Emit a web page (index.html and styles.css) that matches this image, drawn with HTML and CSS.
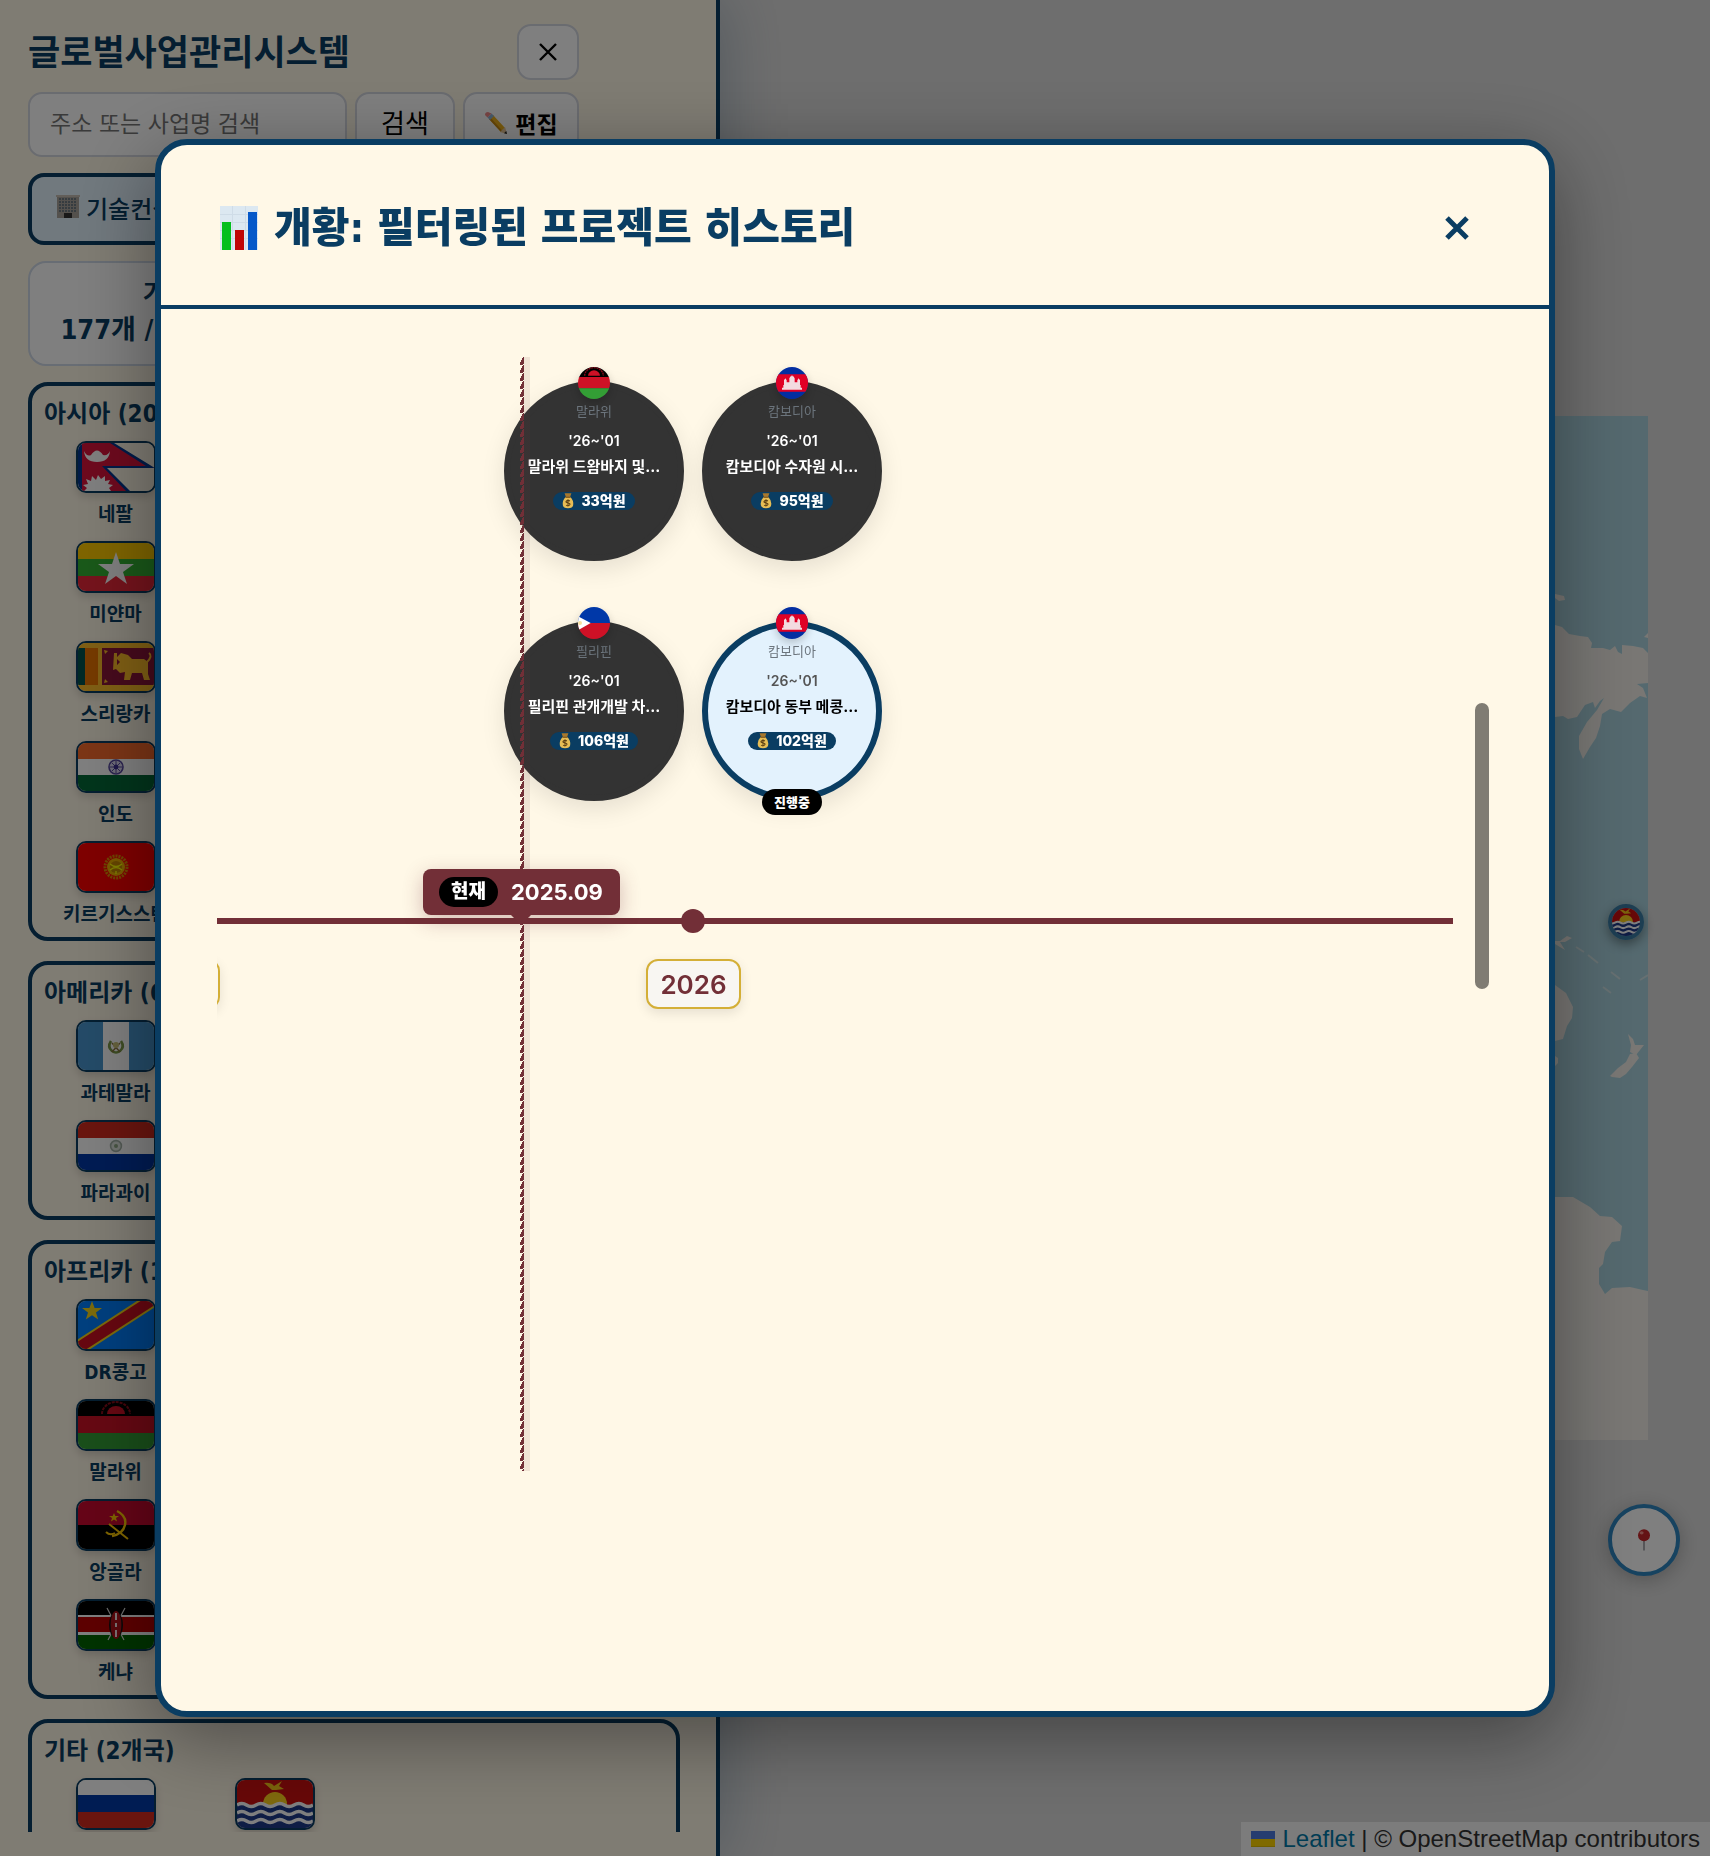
FILE: index.html
```html
<!DOCTYPE html>
<html lang="ko">
<head>
<meta charset="utf-8">
<title>글로벌사업관리시스템</title>
<link rel="stylesheet" href="styles.css">
</head>
<body>
<svg class="defs" aria-hidden="true">
  <symbol id="f-np" viewBox="0 0 76 48" preserveAspectRatio="xMidYMid slice">
    <path fill="#fff8e7" d="M0 0h76v48H0z"/><path fill="#003893" d="M0 0h36l41 25H29l23 23H0z"/><path fill="#dc143c" d="M4 0h28l36 23H24l24 25H4z"/>
    <path fill="#fff" d="M6 8q3 6 7 4q6-9 12 0q5 1 7-4q-1 11-13 11T6 8zM6 48l3-3-4-3 5-1-2-5 5 2 1-5 4 4 2-5 3 4 4-3 0 5 5-1-2 4 5 1-4 3 2 3z"/>
  </symbol>
  <symbol id="f-mm" viewBox="0 0 76 48" preserveAspectRatio="xMidYMid slice">
    <path fill="#fecb00" d="M0 0h76v16H0z"/><path fill="#34b233" d="M0 16h76v17H0z"/><path fill="#ea2839" d="M0 33h76v15H0z"/>
    <path fill="#fff" d="M38 9l4 12h14L45 29l4 12-11-8-11 8 4-12-11-8h14z"/>
  </symbol>
  <symbol id="f-lk" viewBox="0 0 76 48" preserveAspectRatio="xMidYMid slice">
    <path fill="#ffbe29" d="M0 0h76v48H0z"/><path fill="#00534e" d="M0 5h7v37H0z"/><path fill="#eb7400" d="M7 5h13v37H7z"/><path fill="#8d153a" d="M24 5h52v37H24z"/>
    <path fill="#ffbe29" d="M36 10h3v12l3-3-4-4 5-5 7 2 4 4h12l4 3v12l2 6h-6l-2-7h-10l-2 7h-6l1-8-5 1-4-4-3 1zM26 7l4 1-3 3zM26 40l1-4 3 3z"/><path stroke="#ffbe29" stroke-width="2" fill="none" d="M69 19q6-6 2-9"/>
  </symbol>
  <symbol id="f-in" viewBox="0 0 76 48" preserveAspectRatio="xMidYMid slice">
    <path fill="#f96b2c" d="M0 0h76v16H0z"/><path fill="#fff" d="M0 16h76v16H0z"/><path fill="#046a38" d="M0 32h76v16H0z"/>
    <circle cx="38" cy="24" r="7" fill="#dcd8f0" stroke="#5748a0" stroke-width="1.6"/><path stroke="#5748a0" d="M38 18v12M32 24h12M34 20l8 8M42 20l-8 8"/><circle cx="38" cy="24" r="2.4" fill="#3f3296"/>
  </symbol>
  <symbol id="f-kg" viewBox="0 0 76 48" preserveAspectRatio="xMidYMid slice">
    <path fill="#f00" d="M0 0h76v48H0z"/><circle cx="38" cy="24" r="11" fill="none" stroke="#e08a00" stroke-width="3" stroke-dasharray="2 1"/><circle cx="38" cy="24" r="9" fill="#f0b400"/><circle cx="38" cy="24" r="6" fill="#c98a00"/><path stroke="#ff0" fill="none" stroke-width="1.4" d="M32 21q6 5 12 0M32 27q6-5 12 0M38 28v3"/>
  </symbol>
  <symbol id="f-gt" viewBox="0 0 76 48" preserveAspectRatio="xMidYMid slice">
    <path fill="#4997d0" d="M0 0h76v48H0z"/><path fill="#fff" d="M25 0h26v48H25z"/><path fill="none" stroke="#7c9a48" stroke-width="2.6" d="M33 19q-4 6 1 10q4 3 8 0q5-4 1-10"/><path stroke="#8a7440" stroke-width="1.4" d="M34 30l8-9M42 30l-8-9"/><circle cx="38" cy="23" r="3" fill="#c9c27a"/>
  </symbol>
  <symbol id="f-py" viewBox="0 0 76 48" preserveAspectRatio="xMidYMid slice">
    <path fill="#d52b1e" d="M0 0h76v16H0z"/><path fill="#fff" d="M0 16h76v16H0z"/><path fill="#0038a8" d="M0 32h76v16H0z"/><circle cx="38" cy="24" r="5.4" fill="#e2e8e2" stroke="#a5b3a8" stroke-width="1.6"/><circle cx="38" cy="24" r="2" fill="#8fa886"/>
  </symbol>
  <symbol id="f-cd" viewBox="0 0 76 48" preserveAspectRatio="xMidYMid slice">
    <path fill="#007fff" d="M0 0h76v48H0z"/><path stroke="#f7d618" stroke-width="15" d="M-6 51L82-6"/><path stroke="#ce1021" stroke-width="11" d="M-6 51L82-6"/><path fill="#f7d618" d="M14 0l2.600 7H24l-6 4.400 2.200 7.200-6.200-4.300L7.800 18.600 10 11.400 4 7h7.400z"/>
  </symbol>
  <symbol id="f-mw" viewBox="0 0 76 48" preserveAspectRatio="xMidYMid slice">
    <path fill="#000" d="M0 0h76v16H0z"/><path fill="#ce1126" d="M0 15h76v17H0z"/><path fill="#339e35" d="M0 32h76v16H0z"/><path fill="#ce1126" d="M29 13a9 8 0 0 1 18 0z"/><path fill="none" stroke="#8a0c1a" stroke-width="2" stroke-dasharray="3 1" d="M24 13a14 12 0 0 1 28 0"/>
  </symbol>
  <symbol id="f-ao" viewBox="0 0 76 48" preserveAspectRatio="xMidYMid slice">
    <path fill="#cc092f" d="M0 0h76v24H0z"/><path fill="#000" d="M0 24h76v24H0z"/><path fill="none" stroke="#ffcb00" stroke-width="2.400" d="M39 10q10 5 8 14t-13 11"/><path stroke="#ffcb00" stroke-width="2" fill="none" d="M31 23l19 15M28 31q4 4 9 1"/><path fill="#ffcb00" d="M36 12l1.300 3H41l-3 2 1 3.500-3-2-3 2 1-3.500-3-2h3.700z"/>
  </symbol>
  <symbol id="f-ke" viewBox="0 0 76 48" preserveAspectRatio="xMidYMid slice">
    <path fill="#000" d="M0 0h76v14H0z"/><path fill="#fff" d="M0 14h76v20H0z"/><path fill="#b00" d="M0 16h76v15H0z"/><path fill="#060" d="M0 34h76v14H0z"/><path stroke="#ddd" stroke-width="1.200" d="M29 7l17 32M47 7L30 39"/><ellipse cx="38" cy="24" rx="7" ry="13" fill="#111"/><ellipse cx="38" cy="24" rx="5.400" ry="14" fill="#b01018"/><path stroke="#fff" stroke-width="1.800" d="M38 12v7M38 22v4M38 29v7"/>
  </symbol>
  <symbol id="f-ru" viewBox="0 0 76 48" preserveAspectRatio="xMidYMid slice">
    <path fill="#fff" d="M0 0h76v16H0z"/><path fill="#0039a6" d="M0 15h76v17H0z"/><path fill="#d52b1e" d="M0 32h76v16H0z"/>
  </symbol>
  <symbol id="f-ki" viewBox="0 0 76 48" preserveAspectRatio="xMidYMid slice">
    <path fill="#ce1010" d="M0 0h76v26H0z"/><circle cx="38" cy="24" r="12" fill="#ffd21c"/><path fill="#f5c518" d="M27 3q7-1 10 3l8-5-3 5 5 3-8 1-4 0z"/><path fill="#1e3a8a" d="M0 25h76v23H0z"/>
    <path fill="none" stroke="#fff" stroke-width="3.400" d="M0 25q5-3 9.500 0t9.500 0 9.500 0 9.500 0 9.500 0 9.500 0 9.500 0 9.500 0M0 33q5-3 9.500 0t9.500 0 9.500 0 9.500 0 9.500 0 9.500 0 9.500 0 9.500 0M0 41q5-3 9.500 0t9.500 0 9.500 0 9.500 0 9.500 0 9.500 0 9.500 0 9.500 0"/>
  </symbol>
  <symbol id="f-kh" viewBox="0 0 48 48">
    <path fill="#032ea1" d="M0 0h48v48H0z"/><path fill="#e00025" d="M0 11h48v26H0z"/><path fill="#f3dbe0" d="M9 34v-3h2v-4h1v-7l2-3 2 3v3h4v-6l2-3 1 0 1-2 1 2 1 0 2 3v6h4v-3l2-3 2 3v7h1v4h2v3z"/>
  </symbol>
  <symbol id="f-ph" viewBox="0 0 48 48">
    <path fill="#0038a8" d="M0 0h48v24H0z"/><path fill="#ce1126" d="M0 24h48v24H0z"/><path fill="#fff" d="M0 14l19 10L0 35z"/><circle cx="3" cy="24" r="3" fill="#f7dfa0"/>
  </symbol>
  <symbol id="i-bag" viewBox="0 0 14 18">
    <path fill="#a9782c" d="M3 0h8L9.500 4h-5z"/><path fill="#e6bd55" d="M4.500 4h5Q14 8.500 13 14q-.5 3.500-6 3.500T1 14Q0 8.500 4.500 4z"/><path fill="#7c5015" d="M4 4h6v1.300H4z"/><path fill="none" stroke="#5d4013" stroke-width="1.200" d="M9.200 9Q7 7.500 5.200 9t1.800 2.300 1.700 2.400-3.900 0M7 7v8.500"/>
  </symbol>
</svg>

<div class="app">
  <main class="map">
    <svg class="world" viewBox="0 0 1024 1024" aria-hidden="true">
      <path fill="#aad3df" d="M0 0h1024v1024H0z"/>
      <g fill="#f2efe9" transform="translate(931 0)">
        <path d="M0 178l9 2 1 4-6 1-4-3z"/>
        <path d="M0 209L7 211 14 218 25 220 33 221 37 227 36 232 48 232 55 234 60 230 63 236 67 238 67 229 78 230 88 232 93 237V267L82 268 88 272 92 282 85 280 75 287 66 296 55 293 47 298 45 310 41 322 35 331 28 343 24 333 24 320 32 306 42 294 49 282 45 285 40 292 38 286 30 289 22 301 13 303 8 300 0 301z"/>
        <path d="M89 221l4-4v5zM0 525l5 0 7-5 5 2-7 4-5 0 5 8-10-6z"/>
        <path d="M0 569l11 8 7 14-1 11-5 8-4 13-8 2zM0 640l3 2v5l-3 3zM55 660l8-8 8-6 4-8 6-1 3 5-7 9-6 7-6 4-8-1zM73 618l5 5 2 6 9 0-8 10-6-3 1-7z"/>
        <path d="M0 781H18L35 791 45 800 57 801 67 810 65 825 57 826 50 836 48 848 44 852V868L50 878 57 872 75 871 88 874 93 875V1024H0z"/>
      </g>
      <path stroke="#f2efe9" stroke-width="2" fill="none" opacity=".5" d="M952 531l8 5M964 539l10 8M987 556l9 7M979 571l8 6M1016 564l8-5"/>
    </svg>
    <svg class="marker" role="img" aria-label="키리바시"><use href="#f-ki"/></svg>
    <button class="locate" aria-label="내 위치">
      <svg width="16" height="24" viewBox="0 0 20 28"><path stroke="#a9a9ae" stroke-width="2.400" d="M10 12v15"/><circle cx="10" cy="8" r="7.500" fill="#c8262a"/><ellipse cx="7" cy="5" rx="2.500" ry="2" fill="#f58a86"/></svg>
    </button>
    <footer class="credit">
      <svg width="24" height="16" viewBox="0 0 24 16"><path fill="#4c7be1" d="M0 0h24v8H0z"/><path fill="#ffd500" d="M0 8h24v8H0z"/><path fill="#e0bc00" d="M0 15h24v1H0z"/></svg>
      <span><a href="#leaflet">Leaflet</a> | © OpenStreetMap contributors</span>
    </footer>
  </main>

  <aside class="sidebar">
    <div class="tools">
      <div class="brand"><h1>글로벌사업관리시스템</h1>
        <button class="box close" aria-label="닫기"><svg width="20" height="20" viewBox="0 0 20 20"><path stroke="#000" stroke-width="2.400" d="M2 2l16 16M18 2L2 18"/></svg></button></div>
      <form class="search">
        <input class="box" type="text" aria-label="검색어" placeholder="주소 또는 사업명 검색">
        <button class="box find" type="button">검색</button>
        <button class="box edit" type="button"><svg width="24" height="24" viewBox="0 0 24 24"><path fill="#f0b31c" d="M5 8l4-4 12 13-4 4z"/><path fill="#c98a10" d="M5 8l1.500-1.500L18.500 20 17 21z"/><path fill="#8fb4d6" d="M3.500 6.500l4-4L10 5 6 9z"/><path fill="#f08a8a" d="M1 4q0-3 3-3l3.500 1.500-4 4z"/><path fill="#e8c898" d="M21 16l2 7-7-2z"/><path fill="#222" d="M22.300 20l.7 3-3-.8z"/></svg>편집</button>
      </form>
    </div>
    <button class="tab" type="button">
      <svg width="24" height="24" viewBox="0 0 24 24"><path fill="#a8a29a" d="M1 1h22v22H1z"/><path stroke="#5a6b78" stroke-width="1.500" stroke-dasharray="2 1" d="M3 4h18M3 7h18M3 10h18M3 13h18M3 16h18"/><path fill="#333" d="M8 18h8v5H8z"/><path fill="#c4bdb2" d="M0 0h24v2H0z"/></svg>기술컨설팅
    </button>
    <section class="stat"><h2>기술컨설</h2><p>177개 / 18,200억 원</p></section>
    <div class="regions">
      <section class="region"><h2>아시아 (20개국)</h2>
        <ul>
          <li class="first"><svg><use href="#f-np"/></svg>네팔</li>
          <li class="first"><svg><use href="#f-mm"/></svg>미얀마</li>
          <li class="first"><svg><use href="#f-lk"/></svg>스리랑카</li>
          <li class="first"><svg><use href="#f-in"/></svg>인도</li>
          <li class="first"><svg><use href="#f-kg"/></svg>키르기스스탄</li>
        </ul>
      </section>
      <section class="region"><h2>아메리카 (6개국)</h2>
        <ul>
          <li class="first"><svg><use href="#f-gt"/></svg>과테말라</li>
          <li class="first"><svg><use href="#f-py"/></svg>파라과이</li>
        </ul>
      </section>
      <section class="region"><h2>아프리카 (16개국)</h2>
        <ul>
          <li class="first"><svg><use href="#f-cd"/></svg>DR콩고</li>
          <li class="first"><svg><use href="#f-mw"/></svg>말라위</li>
          <li class="first"><svg><use href="#f-ao"/></svg>앙골라</li>
          <li class="first"><svg><use href="#f-ke"/></svg>케냐</li>
        </ul>
      </section>
      <section class="region"><h2>기타 (2개국)</h2>
        <ul>
          <li><svg><use href="#f-ru"/></svg></li>
          <li><svg><use href="#f-ki"/></svg></li>
        </ul>
      </section>
    </div>
  </aside>
</div>

<div class="overlay">
  <div class="modal" role="dialog" aria-labelledby="modal-title">
    <header class="modal-head">
      <h2 id="modal-title"><svg width="38" height="44" viewBox="0 0 38 44"><path fill="#dce8f1" d="M0 0h38v44H0z"/><path stroke="#cfdce7" d="M0 8.500h38M0 16.500h38M0 24.500h38M0 32.500h38M12.500 0v44M25.500 0v44"/><path fill="#04bf1e" d="M2 16h9v28H2z"/><path fill="#c00505" d="M15 24h9v20h-9z"/><path fill="#0558c9" d="M28 6h9v38h-9z"/></svg>개황: 필터링된 프로젝트 히스토리</h2>
      <button class="dismiss" aria-label="닫기"><svg width="24" height="24" viewBox="0 0 24 24"><path stroke="#0a3d62" stroke-width="5" d="M2 2l20 20M22 2L2 22"/></svg></button>
    </header>
    <div class="modal-body">
      <div class="timeline">
        <div class="axis"></div>
        <div class="tick"></div>
        <span class="year prev"></span>
        <span class="year">2026</span>
        <div class="projects">
          <article class="card"><svg class="flag"><use href="#f-mw"/></svg><small>말라위</small><time>'26~'01</time><b>말라위 드왐바지 및...</b><span class="cost"><svg width="12" height="16"><use href="#i-bag"/></svg>33억원</span></article>
          <article class="card"><svg class="flag"><use href="#f-kh"/></svg><small>캄보디아</small><time>'26~'01</time><b>캄보디아 수자원 시...</b><span class="cost"><svg width="12" height="16"><use href="#i-bag"/></svg>95억원</span></article>
          <article class="card"><svg class="flag"><use href="#f-ph"/></svg><small>필리핀</small><time>'26~'01</time><b>필리핀 관개개발 차...</b><span class="cost"><svg width="12" height="16"><use href="#i-bag"/></svg>106억원</span></article>
          <article class="card active"><svg class="flag"><use href="#f-kh"/></svg><small>캄보디아</small><time>'26~'01</time><b>캄보디아 동부 메콩...</b><span class="cost"><svg width="12" height="16"><use href="#i-bag"/></svg>102억원</span><span class="status">진행중</span></article>
        </div>
        <div class="now-line"></div>
        <div class="now"><span>현재</span>2025.09</div>
      </div>
      <div class="thumb"></div>
    </div>
  </div>
</div>
</body>
</html>
```
FILE: styles.css
```css
* { box-sizing: border-box; }
body {
  margin: 0;
  height: 100vh;
  overflow: hidden;
  font-family: "DejaVu Sans Condensed", "Noto Sans CJK KR", sans-serif;
  color: #0a3d62;
}
h1, h2, p, ul { margin: 0; padding: 0; }
button, input { font: inherit; }
.defs { position: absolute; width: 0; height: 0; }

/* map */
.app { position: relative; height: 100vh; }
.map { position: absolute; inset: 0; background: #ddd; overflow: hidden; }
.world { position: absolute; top: 416px; right: 62px; width: 1024px; height: 1024px; }
.marker {
  position: absolute;
  top: 904px;
  right: 66px;
  width: 36px;
  height: 36px;
  border: 4px solid #3a7ca5;
  border-radius: 50%;
  box-shadow: 0 4px 12px rgba(0, 0, 0, .4);
}
.locate {
  position: absolute;
  right: 30px;
  bottom: 280px;
  width: 72px;
  height: 72px;
  display: grid;
  place-items: center;
  background: #fff;
  border: 4px solid #2e86c1;
  border-radius: 50%;
  box-shadow: 0 4px 20px rgba(0, 0, 0, .25);
}
.credit {
  position: absolute;
  right: 0;
  bottom: 0;
  display: flex;
  align-items: center;
  gap: 8px;
  padding: 0 10px;
  background: rgba(255, 255, 255, .8);
  color: #333;
  font: 24px/34px "Liberation Sans", sans-serif;
}
.credit a { color: #0078a8; text-decoration: none; }

/* sidebar */
.sidebar {
  position: relative;
  width: 720px;
  height: 100vh;
  display: flex;
  flex-direction: column;
  gap: 16px;
  padding: 24px 36px 24px 28px;
  background: #fff8e7;
  border-right: 4px solid #0a3d62;
  box-shadow: 0 0 60px rgba(10, 61, 98, .3);
}
.tools { display: flex; flex-direction: column; gap: 12px; width: 551px; }
.brand { display: flex; justify-content: space-between; align-items: center; }
.brand h1 { padding-top: 2px; font-size: 35px; line-height: 48px; font-weight: 700; }
.box { background: #fff; border: 2px solid #d5d8e0; border-radius: 14px; color: #000; }
.close { width: 62px; height: 56px; display: grid; place-items: center; padding: 0; }
.search { display: flex; gap: 8px; height: 65px; }
.search input { flex: 1; min-width: 0; padding: 0 20px 2px; font-size: 23px; }
.search input::placeholder { color: #757575; }
.find { width: 100px; padding: 0 0 6px; font-size: 26px; font-weight: 400; }
.edit { width: 116px; padding: 0 0 4px; display: flex; align-items: center; justify-content: center; gap: 7px; font-size: 23px; font-weight: 700; }
.tab {
  display: flex;
  align-items: center;
  gap: 6px;
  width: 318px;
  height: 72px;
  flex: none;
  padding: 0 24px 4px;
  border: 4px solid #0a3d62;
  border-radius: 16px;
  background: #e3f2fd;
  color: #0a3d62;
  font-size: 24px;
  font-weight: 500;
}
.stat {
  width: 318px;
  height: 105px;
  flex: none;
  padding: 12px 0;
  border: 2px solid #d0dae8;
  border-radius: 18px;
  background: #fff;
  text-align: center;
  white-space: nowrap;
}
.stat h2 { font-size: 24px; line-height: 36px; }
.stat p { font-size: 27px; line-height: 38px; font-weight: 700; }
.regions { flex: 1; min-height: 0; overflow: hidden; display: flex; flex-direction: column; gap: 20px; }
.region { flex: none; padding: 12px; border: 4px solid #0a3d62; border-radius: 20px; }
.region h2 { margin-bottom: 10px; font-size: 24px; line-height: 33px; font-weight: 700; }
.region ul { display: grid; grid-template-columns: repeat(4, 1fr); gap: 16px; list-style: none; }
.region li { height: 84px; display: flex; flex-direction: column; align-items: center; gap: 10px; font-size: 19px; line-height: 22px; font-weight: 700; white-space: nowrap; }
.region .first { grid-column: 1; }
.region li svg { width: 80px; height: 52px; flex: none; border: 2px solid #0a3d62; border-radius: 10px; box-shadow: 0 4px 8px rgba(0, 0, 0, .15); }

/* modal */
.overlay { position: fixed; inset: 0; display: grid; place-items: center; background: rgba(0, 0, 0, .5); }
.modal {
  width: 82%;
  max-width: 1400px;
  height: 85vh;
  display: flex;
  flex-direction: column;
  background: #fff8e7;
  border: 6px solid #0a3d62;
  border-radius: 32px;
  box-shadow: 0 20px 80px rgba(0, 0, 0, .4);
  font-family: Inter, "Noto Sans CJK KR", sans-serif;
}
.modal-head { height: 164px; flex: none; display: flex; justify-content: space-between; align-items: center; padding: 6px 76px 0 59px; border-bottom: 4px solid #0a3d62; }
.modal-head h2 { display: flex; align-items: center; gap: 16px; font-family: "DejaVu Sans Condensed", "Noto Sans CJK KR", sans-serif; font-size: 41px; line-height: 56px; font-weight: 900; }
.dismiss { width: 32px; height: 32px; padding: 0; display: grid; place-items: center; background: none; border: 0; }
.modal-body { position: relative; flex: 1; padding: 48px 96px 0 56px; }
.timeline { position: relative; height: 60vh; overflow: hidden; color: #722f37; }
.axis { position: absolute; top: 561px; left: 0; right: 0; height: 6px; background: #722f37; }
.tick { position: absolute; top: 552px; left: 464px; width: 24px; height: 24px; border-radius: 50%; background: #722f37; }
.year {
  position: absolute;
  top: 602px;
  left: 429px;
  width: 95px;
  height: 50px;
  border: 2px solid #d4af37;
  border-radius: 12px;
  background: #f8f6f2;
  box-shadow: 0 4px 12px rgba(0, 0, 0, .1);
  font-size: 26px;
  line-height: 47px;
  font-weight: 600;
  text-align: center;
}
.prev { left: -92px; }
.projects { position: absolute; top: 24px; left: 287px; display: grid; grid-template-columns: 180px 180px; gap: 60px 18px; }
.card {
  position: relative;
  width: 180px;
  height: 180px;
  display: flex;
  flex-direction: column;
  align-items: center;
  padding-top: 14px;
  border: 6px solid #333;
  border-radius: 50%;
  background: #333;
  color: #fff;
  box-shadow: 0 8px 24px rgba(0, 0, 0, .1);
  white-space: nowrap;
}
.active { background: #e3f2fd; border-color: #0a3d62; color: #000; }
.flag { position: absolute; top: -20px; left: 68px; width: 32px; height: 32px; border-radius: 50%; box-shadow: 0 4px 8px rgba(0, 0, 0, .2); }
.card small { font-size: 13px; line-height: 20px; color: #6c757d; }
.card time { margin-top: 10px; font-size: 14px; line-height: 20px; font-weight: 600; }
.active time { color: #555; }
.card b { margin-top: 4px; font-size: 15px; line-height: 24px; font-weight: 700; }
.cost { display: flex; align-items: center; gap: 7px; height: 18px; margin-top: 13px; padding: 0 9px; border-radius: 9px; background: #0a3d62; color: #fff; font-size: 14px; line-height: 18px; font-weight: 800; }
.status { position: absolute; bottom: -20px; padding: 0 12px; border-radius: 13px; background: #000; color: #fff; font-size: 13px; line-height: 26px; font-weight: 900; }
.now-line {
  position: absolute;
  top: 0;
  bottom: 0;
  left: 303px;
  width: 10px;
  background:
    linear-gradient(to bottom right, transparent 36%, #722f37 36%, #722f37 86%, transparent 86%) 0 0 / 4px 8px repeat-y,
    linear-gradient(rgba(114, 47, 55, .1), rgba(114, 47, 55, .1)) 4px 0 / 6px 100% no-repeat;
}
.now {
  position: absolute;
  top: 512px;
  left: 206px;
  height: 46px;
  display: flex;
  align-items: center;
  gap: 13px;
  padding: 0 17px 0 16px;
  border-radius: 8px;
  background: #722f37;
  color: #fff;
  box-shadow: 0 6px 20px rgba(114, 47, 55, .3);
  font-size: 22px;
  font-weight: 700;
}
.now span { padding: 0 12px; border-radius: 15px; background: #000; font-size: 19px; line-height: 30px; font-weight: 900; }
.now::after { content: ""; position: absolute; top: 46px; left: 88px; border: 10px solid transparent; border-top-color: #722f37; border-bottom: 0; }
.thumb { position: absolute; top: 394px; right: 60px; width: 14px; height: 286px; border-radius: 7px; background: #807c73; }
```
